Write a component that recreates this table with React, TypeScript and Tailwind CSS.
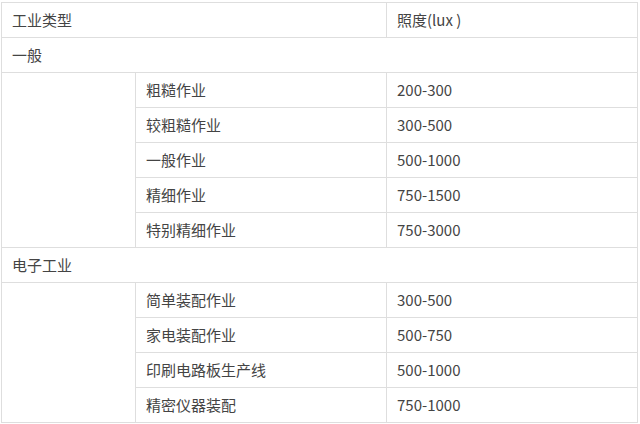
const groups = [
  {
    name: "一般",
    items: [
      ["粗糙作业", "200-300"],
      ["较粗糙作业", "300-500"],
      ["一般作业", "500-1000"],
      ["精细作业", "750-1500"],
      ["特别精细作业", "750-3000"],
    ],
  },
  {
    name: "电子工业",
    items: [
      ["简单装配作业", "300-500"],
      ["家电装配作业", "500-750"],
      ["印刷电路板生产线", "500-1000"],
      ["精密仪器装配", "750-1000"],
    ],
  },
];

const cell = "border border-[#dedede] px-[10px] text-left align-middle font-normal";

export default function App() {
  return (
    <div className="h-[424px] w-[640px] overflow-hidden bg-white pl-px pt-[2px] font-['Microsoft_YaHei','Noto_Sans_CJK_SC',sans-serif] text-[15px] text-[#444]">
      <table className="w-[636px] table-fixed border-collapse">
        <colgroup>
          <col className="w-[134px]" />
          <col className="w-[251px]" />
          <col className="w-[251px]" />
        </colgroup>
        <tbody>
          <tr className="h-[35px]">
            <td colSpan={2} className={cell}>工业类型</td>
            <td className={cell}>照度(lux )</td>
          </tr>
          {groups.map((g) => (
            <Group key={g.name} name={g.name} items={g.items} />
          ))}
        </tbody>
      </table>
    </div>
  );
}

function Group({ name, items }: { name: string; items: string[][] }) {
  return (
    <>
      <tr className="h-[35px]">
        <td colSpan={3} className={cell}>{name}</td>
      </tr>
      {items.map(([work, lux], i) => (
        <tr key={work} className="h-[35px]">
          {i === 0 ? <td rowSpan={items.length} className={cell} /> : null}
          <td className={cell}>{work}</td>
          <td className={cell}>{lux}</td>
        </tr>
      ))}
    </>
  );
}
